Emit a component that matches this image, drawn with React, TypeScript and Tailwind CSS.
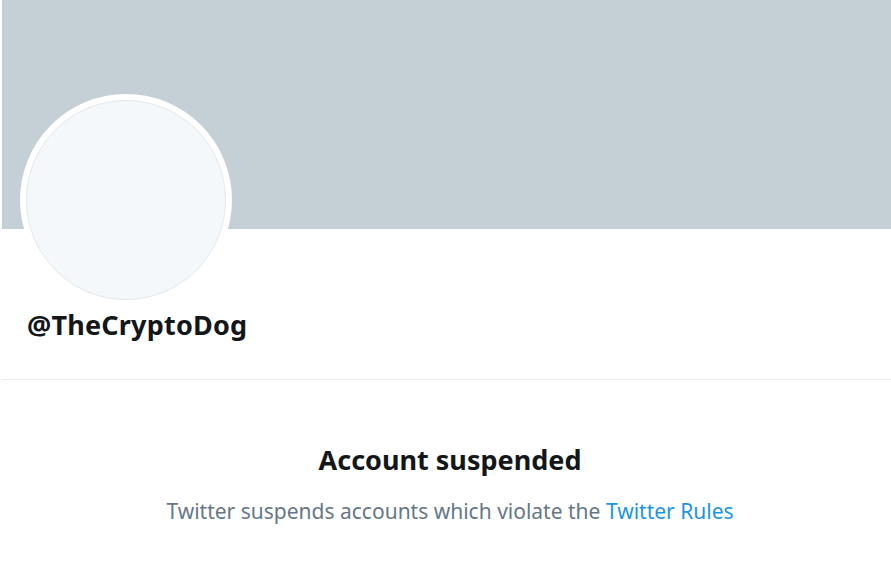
import React from 'react'

const Avatar = () => {
  return (
    <div className="ml-[18px] -mt-[135px] h-[212px] w-[212px] rounded-full bg-white p-[6px]">
      <div className="h-full w-full rounded-full border border-[#e1e8ed] bg-[#f5f8fa]"></div>
    </div>
  )
}

const App = () => {
  return (
    <div className="h-[583px] w-[891px] overflow-hidden bg-white font-['Noto_Sans',sans-serif]">
      <div className="w-[898px] pl-[2px]">
        <div className="h-[229px] bg-[#c4cfd6]"></div>
        <Avatar />
        <div className="px-[25px] pt-[1px] pb-[36px]">
          <h2 className="text-[27px] font-bold leading-[36px] tracking-[0.2px] text-[#14171a]">@TheCryptoDog</h2>
        </div>
        <div className="border-t border-[#e6ecf0]"></div>
        <div className="flex flex-col items-center pt-[62px]">
          <h1 className="text-[27px] font-bold leading-[36px] text-[#14171a]">Account suspended</h1>
          <p className="mt-[19px] text-[21px] leading-[28px] text-[#657786]">
            Twitter suspends accounts which violate the{' '}
            <a href="#" className="text-[#1b95e0]">Twitter Rules</a>
          </p>
        </div>
      </div>
    </div>
  )
}

export default App
